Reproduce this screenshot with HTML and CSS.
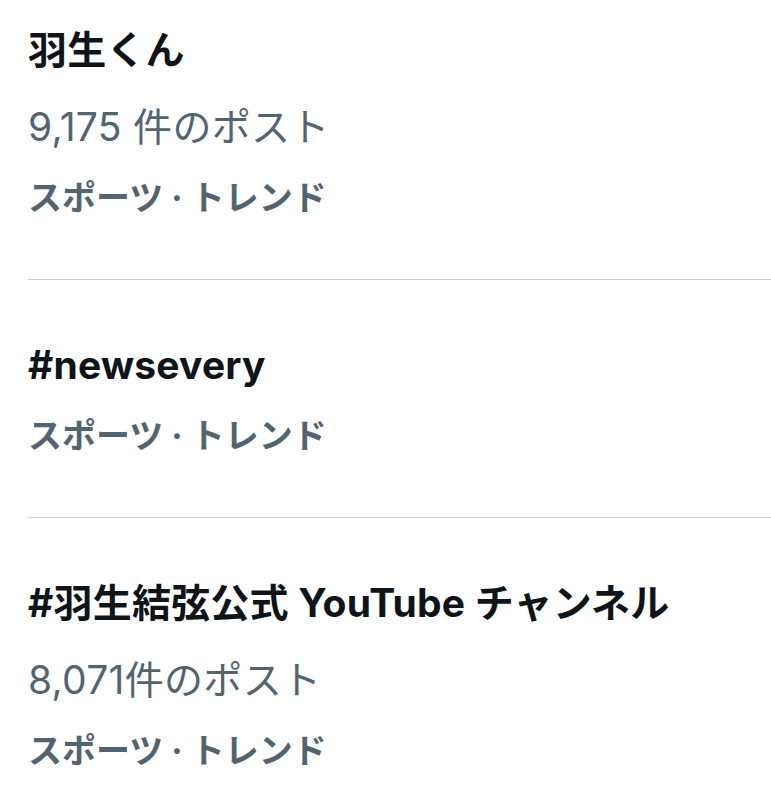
FILE: index.html
```html
<!DOCTYPE html>
<html lang="ja">

<head>
    <meta charset="UTF-8">
    <meta name="viewport" content="width=device-width, initial-scale=1.0" />
    <title>トレンド</title>
    <link rel="stylesheet" href="styles.css">
</head>

<body>
    <div id="trends">
        <div class="trend first">
            <div class="trend-title">羽生くん</div>
            <div class="trend-count">9,175 件のポスト</div>
            <div class="trend-meta">スポーツ · トレンド</div>
        </div>
        <div class="trend">
            <div class="trend-title">#newsevery</div>
            <div class="trend-meta">スポーツ · トレンド</div>
        </div>
        <div class="trend last">
            <div class="trend-title">#羽生結弦公式 YouTube チャンネル</div>
            <div class="trend-count">8,071件のポスト</div>
            <div class="trend-meta">スポーツ · トレンド</div>
        </div>
    </div>
</body>

</html>
```

FILE: styles.css
```css
* {
    margin: 0;
    padding: 0;
    box-sizing: border-box;
}

html {
    background-color: #FFFFFF;
    font-family: Inter, "Noto Sans CJK JP", sans-serif;
}

#trends {
    display: flex;
    flex-direction: column;
}

.trend {
    display: flex;
    flex-direction: column;
    margin-left: 28px;
    padding: 55px 0 51px 0;
    border-top: 1px solid #CDCDCD;
}

.trend.first {
    padding-top: 20px;
    border-top: none;
}

.trend.last {
    padding-bottom: 0;
}

.trend-title {
    font-size: 39px;
    font-weight: 700;
    line-height: 60px;
    color: #0F1419;
    letter-spacing: 0.2px;
}

.trend-count {
    margin-top: 17px;
    font-size: 39px;
    font-weight: 400;
    line-height: 60px;
    color: #536471;
    letter-spacing: 0.3px;
}

.trend-meta {
    margin-top: 11px;
    font-size: 34px;
    font-weight: 700;
    line-height: 60px;
    color: #536471;
}
```
